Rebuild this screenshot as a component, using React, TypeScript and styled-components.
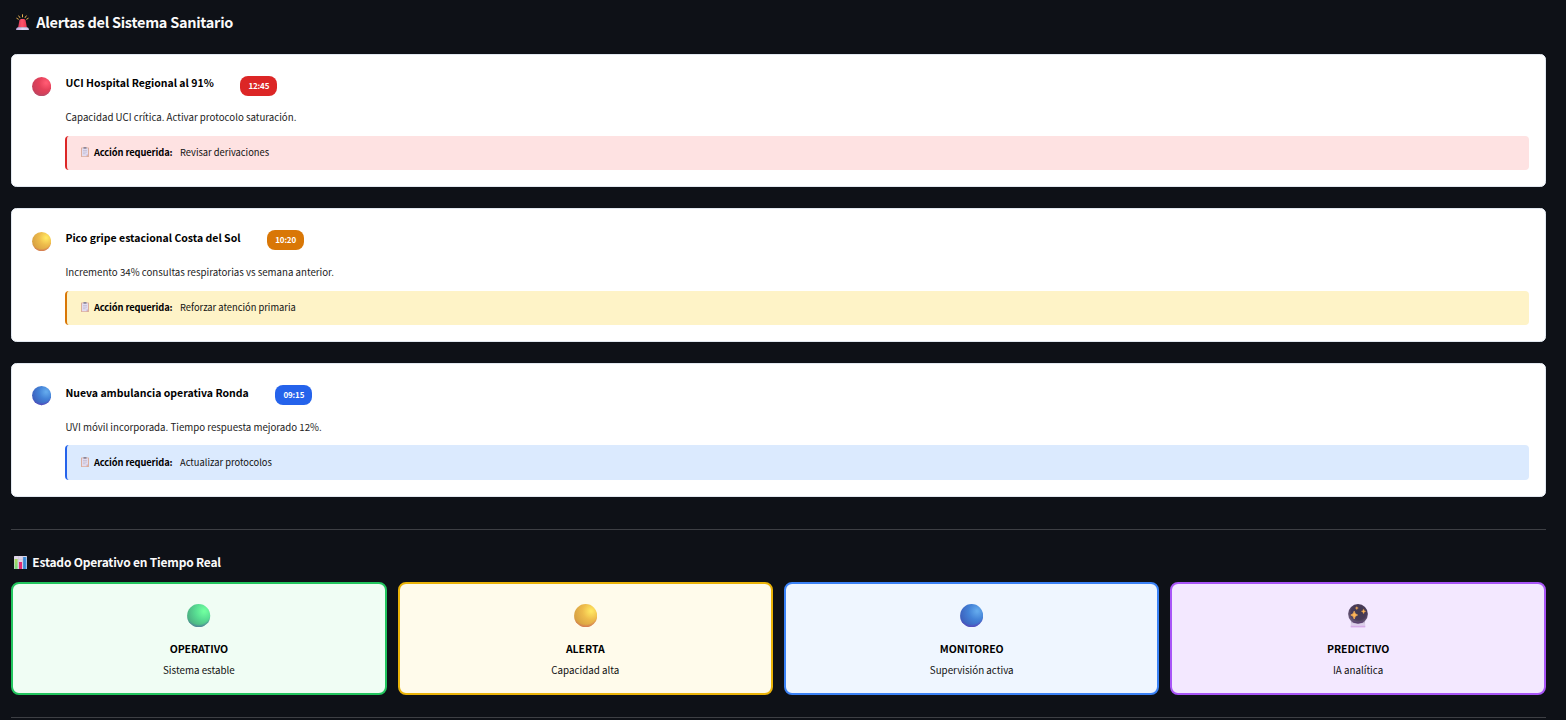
import React from "react";
import styled, { createGlobalStyle } from "styled-components";

const GlobalStyle = createGlobalStyle`
  * { box-sizing: border-box; }
  html, body { margin: 0; padding: 0; background: #0e1117; }
  body {
    height: 720px;
    overflow: hidden;
    font-family: "Noto Sans CJK SC", "Noto Sans", sans-serif;
    color: #fafafa;
  }
`;

const Page = styled.main`
  display: flex;
  flex-direction: column;
  width: 1566px;
  height: 720px;
  padding: 0 20px 0 11px;
  overflow: hidden;
`;

const PageTitle = styled.h3`
  display: flex;
  align-items: center;
  gap: 6.3px;
  height: 20px;
  margin: 12px 0 21.6px;
  padding-left: 4px;
  font-size: 14.5px;
  letter-spacing: -0.28px;
  line-height: 20px;
  font-weight: 700;
  white-space: nowrap;
`;

const SectionTitle = styled.h4`
  display: flex;
  align-items: center;
  gap: 5.3px;
  height: 20px;
  margin: 22px 0 10px;
  padding-left: 3px;
  font-size: 12px;
  letter-spacing: -0.21px;
  line-height: 20px;
  font-weight: 700;
  white-space: nowrap;
  svg { margin-top: 1px; }
`;

const AlertList = styled.div`
  display: flex;
  flex-direction: column;
  gap: 20.97px;
`;

const AlertCard = styled.article`
  display: flex;
  gap: 14px;
  height: 133.7px;
  padding: 20.7px 16px 0 20px;
  background: #fff;
  border: 1px solid #e2e8f0;
  border-radius: 5.3px;
`;

const AlertIcon = styled.div`
  flex: none;
  width: 19.4px;
  padding-top: 1.7px;
  svg { display: block; }
`;

const AlertBody = styled.div`
  flex: 1;
  min-width: 0;
`;

const AlertHead = styled.div`
  display: flex;
  align-items: flex-start;
  gap: 26.6px;
  height: 20px;
`;

const AlertTitle = styled.div`
  font-size: 10.5px;
  line-height: 16px;
  font-weight: 700;
  color: #000;
  white-space: nowrap;
`;

const TimeBadge = styled.span<{ $color: string }>`
  width: 37px;
  height: 20px;
  margin-top: 0.3px;
  border-radius: 8px;
  background: ${(p) => p.$color};
  color: #fff;
  font-size: 8px;
  letter-spacing: -0.15px;
  line-height: 19px;
  font-weight: 700;
  text-align: center;
`;

const AlertText = styled.p`
  margin: 14px 0 10.7px;
  font-size: 9.7px;
  line-height: 16px;
  color: #222;
  white-space: nowrap;
`;

const ActionBar = styled.div<{ $color: string; $background: string }>`
  display: flex;
  align-items: center;
  height: 34.3px;
  padding: 0 0 1.7px 13.5px;
  border-left: 2px solid ${(p) => p.$color};
  border-radius: 4px;
  background: ${(p) => p.$background};
  color: #111;
  font-size: 9.33px;
  line-height: 16px;
  white-space: nowrap;
  strong { margin: 0 7.5px 0 5px; color: #000; letter-spacing: -0.11px; }
`;

const Divider = styled.hr`
  flex: none;
  width: 100%;
  height: 1px;
  margin: 0;
  border: 0;
  background: #3d3f44;
`;

const SectionDivider = styled(Divider)`
  margin-top: 32.36px;
`;

const StatusGrid = styled.div`
  display: grid;
  grid-template-columns: repeat(4, 1fr);
  gap: 10.9px;
  margin: 0 0.17px 22px 0.13px;
`;

const StatusCard = styled.article<{ $color: string; $background: string }>`
  display: flex;
  flex-direction: column;
  align-items: center;
  height: 113px;
  padding-top: 19.6px;
  border: 2px solid ${(p) => p.$color};
  border-radius: 8px;
  background: ${(p) => p.$background};
  svg { display: block; }
`;

const StatusIcon = styled.div`
  display: flex;
  justify-content: center;
  height: 24px;
`;

const StatusName = styled.div`
  margin-top: 13.4px;
  font-size: 10.5px;
  letter-spacing: -0.06px;
  line-height: 16px;
  font-weight: 700;
  color: #000;
`;

const StatusText = styled.div`
  margin-top: 5.5px;
  font-size: 9.8px;
  line-height: 16px;
  color: #111;
`;

type BallTone = "red" | "yellow" | "blue" | "green";

const ballTones: Record<BallTone, [string, string, string, string]> = {
  red: ["#ff5a72", "#e5415a", "#c9405a", "#b3506f"],
  yellow: ["#ffe661", "#eebc4c", "#d8a243", "#d5705a"],
  blue: ["#63a9ec", "#4382d7", "#3d62be", "#5d45bd"],
  green: ["#70ff9f", "#58dd92", "#4cb283", "#5278a0"],
};

function Ball({ tone, size, id }: { tone: BallTone; size: number; id: string }) {
  const [light, mid, dark, rim] = ballTones[tone];
  return (
    <svg width={size} height={size} viewBox="0 0 24 24">
      <defs>
        <radialGradient id={id} cx="0.74" cy="0.3" r="0.75">
          <stop offset="0.05" stopColor={light} />
          <stop offset="0.5" stopColor={mid} />
          <stop offset="1" stopColor={dark} />
        </radialGradient>
        <radialGradient id={`${id}-rim`} cx="0.5" cy="0.36" r="0.64">
          <stop offset="0.8" stopColor={rim} stopOpacity="0" />
          <stop offset="1" stopColor={rim} stopOpacity="0.9" />
        </radialGradient>
      </defs>
      <circle cx="11.9" cy="11.9" r="11.8" fill={`url(#${id})`} />
      <circle cx="11.9" cy="11.9" r="11.8" fill={`url(#${id}-rim)`} />
    </svg>
  );
}

function Siren() {
  return (
    <svg width="15" height="17" viewBox="0 0 15 17">
      <defs>
        <linearGradient id="siren-dome" x1="0" x2="1">
          <stop offset="0" stopColor="#d93b58" />
          <stop offset="0.45" stopColor="#ff5269" />
          <stop offset="1" stopColor="#e8354f" />
        </linearGradient>
        <linearGradient id="siren-base" x1="0" x2="1">
          <stop offset="0" stopColor="#bfa5de" />
          <stop offset="0.5" stopColor="#e0d8f4" />
          <stop offset="1" stopColor="#cfc4e8" />
        </linearGradient>
      </defs>
      <path d="M7.5 .7v2.2M3.7 1.9l1.2 1.7M11.3 1.9l-1.2 1.7M1.8 4.3l1.5.9M13.2 4.3l-1.5.9" stroke="#eab252" strokeWidth="1" strokeLinecap="round" />
      <path d="M3.1 13.6l1.3-7.2Q4.7 4.9 6.2 4.9h2.6q1.5 0 1.8 1.5l1.3 7.2Z" fill="url(#siren-dome)" />
      <path d="M1 16q.1-2.7 2-2.7h9q1.9 0 2 2.7Z" fill="url(#siren-base)" />
    </svg>
  );
}

function Clipboard() {
  return (
    <svg width="8" height="10" viewBox="0 0 8 10">
      <rect x="0" y=".5" width="8" height="9.5" rx=".6" fill="#dcae9d" />
      <path d="M1 1.2h6v6.3L5.6 9.2H1Z" fill="#e2dcf0" />
      <path d="M7 7.5 5.6 9.2V7.5Z" fill="#b7a6cf" />
      <rect x="2.4" y="0" width="3.2" height="1.7" rx=".4" fill="#8b879b" />
      <path d="M2 3.5h4M2 5.1h4M2 6.7h2.5" stroke="#b8b1c9" strokeWidth=".6" />
    </svg>
  );
}

function BarChart() {
  return (
    <svg width="13" height="13" viewBox="0 0 13 13">
      <defs>
        <linearGradient id="bar-green" x1="0" y1="0" x2="0" y2="1">
          <stop offset="0" stopColor="#a9d95c" />
          <stop offset="1" stopColor="#74d879" />
        </linearGradient>
        <linearGradient id="bar-blue" x1="0" x2="1">
          <stop offset="0" stopColor="#2d79c7" />
          <stop offset="1" stopColor="#4aa0e8" />
        </linearGradient>
      </defs>
      <rect width="13" height="13" rx=".5" fill="#ded5e8" />
      <path d="M0 3.5h13M0 7h13M0 10.4h13M4.5 0v13M8.7 0v13" stroke="#c6bbd4" strokeWidth=".4" />
      <rect x=".6" y="3" width="3" height="10" fill="url(#bar-green)" />
      <rect x="5" y="6" width="3" height="7" fill="#e32b72" />
      <rect x="9.2" y="1" width="3.2" height="12" fill="url(#bar-blue)" />
    </svg>
  );
}

function CrystalBall() {
  return (
    <svg width="24" height="24" viewBox="0 0 24 24">
      <defs>
        <radialGradient id="crystal" cx="0.55" cy="0.4" r="0.6">
          <stop offset="0" stopColor="#403a50" />
          <stop offset="0.65" stopColor="#493b58" />
          <stop offset="1" stopColor="#706080" />
        </radialGradient>
        <linearGradient id="crystal-base" x1="0" y1="0" x2="0" y2="1">
          <stop offset="0" stopColor="#aa9fb8" />
          <stop offset="0.45" stopColor="#ded2eb" />
          <stop offset="0.8" stopColor="#dcc4ec" />
          <stop offset="1" stopColor="#cb86df" />
        </linearGradient>
      </defs>
      <path d="M5.2 17h13.6l.6 5.4q0 .9-.9.9h-13q-.9 0-.9-.9Z" fill="url(#crystal-base)" />
      <circle cx="12" cy="9.9" r="9.9" fill="url(#crystal)" />
      <path d="M6.6 17.8q5.4 2.4 10.8 0" fill="none" stroke="#57366e" strokeWidth=".8" />
      <g fill="#ffb657">
        <path d="M8.2 7.2q.5 3.2 3.4 3.8-2.9.6-3.4 4-.5-3.4-3.4-4 2.9-.6 3.4-3.8Z" stroke="#ffb657" strokeWidth=".7" />
        <path d="M17.6 4.9q.3 2.1 2.2 2.4-1.9.3-2.2 2.5-.3-2.2-2.3-2.5 2-.3 2.3-2.4Z" stroke="#d99a4d" strokeWidth=".4" />
        <path d="M10.8 2.6q.3 1.3 1.6 1.5-1.3.3-1.6 1.7-.3-1.4-1.6-1.7 1.3-.2 1.6-1.5Z" stroke="#c98b48" strokeWidth=".3" />
      </g>
    </svg>
  );
}

const alerts: {
  tone: BallTone; title: string; time: string; text: string; action: string; color: string; background: string;
}[] = [
  { tone: "red", title: "UCI Hospital Regional al 91%", time: "12:45", text: "Capacidad UCI crítica. Activar protocolo saturación.", action: "Revisar derivaciones", color: "#dc2626", background: "#fee2e2" },
  { tone: "yellow", title: "Pico gripe estacional Costa del Sol", time: "10:20", text: "Incremento 34% consultas respiratorias vs semana anterior.", action: "Reforzar atención primaria", color: "#d97706", background: "#fef3c7" },
  { tone: "blue", title: "Nueva ambulancia operativa Ronda", time: "09:15", text: "UVI móvil incorporada. Tiempo respuesta mejorado 12%.", action: "Actualizar protocolos", color: "#2563eb", background: "#dbeafe" },
];

const statuses: { tone?: BallTone; name: string; text: string; color: string; background: string }[] = [
  { tone: "green", name: "OPERATIVO", text: "Sistema estable", color: "#22c55e", background: "#f0fdf4" },
  { tone: "yellow", name: "ALERTA", text: "Capacidad alta", color: "#eab308", background: "#fffbeb" },
  { tone: "blue", name: "MONITOREO", text: "Supervisión activa", color: "#3b82f6", background: "#eff6ff" },
  { name: "PREDICTIVO", text: "IA analítica", color: "#a855f7", background: "#f3e8ff" },
];

export default function App() {
  return (
    <>
      <GlobalStyle />
      <Page>
        <PageTitle>
          <Siren />
          <span>Alertas del Sistema Sanitario</span>
        </PageTitle>
        <AlertList>
          {alerts.map((a) => (
            <AlertCard key={a.title}>
              <AlertIcon>
                <Ball tone={a.tone} size={19.4} id={`alert-${a.tone}`} />
              </AlertIcon>
              <AlertBody>
                <AlertHead>
                  <AlertTitle>{a.title}</AlertTitle>
                  <TimeBadge $color={a.color}>{a.time}</TimeBadge>
                </AlertHead>
                <AlertText>{a.text}</AlertText>
                <ActionBar $color={a.color} $background={a.background}>
                  <Clipboard />
                  <strong>Acción requerida:</strong>
                  <span>{a.action}</span>
                </ActionBar>
              </AlertBody>
            </AlertCard>
          ))}
        </AlertList>
        <SectionDivider />
        <SectionTitle>
          <BarChart />
          <span>Estado Operativo en Tiempo Real</span>
        </SectionTitle>
        <StatusGrid>
          {statuses.map((s) => (
            <StatusCard key={s.name} $color={s.color} $background={s.background}>
              <StatusIcon>
                {s.tone ? <Ball tone={s.tone} size={23.5} id={`status-${s.tone}`} /> : <CrystalBall />}
              </StatusIcon>
              <StatusName>{s.name}</StatusName>
              <StatusText>{s.text}</StatusText>
            </StatusCard>
          ))}
        </StatusGrid>
        <Divider />
      </Page>
    </>
  );
}
